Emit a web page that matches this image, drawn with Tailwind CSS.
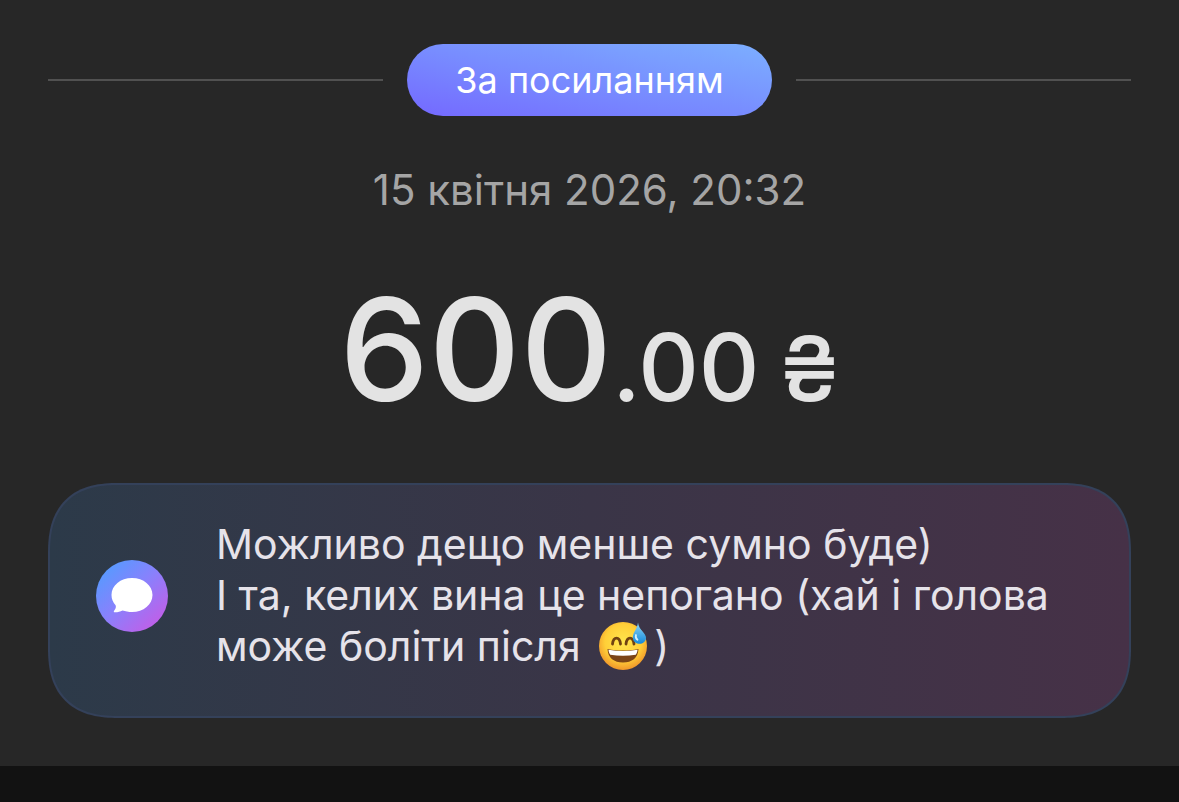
<!DOCTYPE html>
<html lang="uk">
<head>
    <meta charset="UTF-8">
    <meta name="viewport" content="width=device-width, initial-scale=1.0">
    <title>За посиланням</title>
    <script src="https://cdn.jsdelivr.net/npm/@tailwindcss/browser@4"></script>
</head>
<body class="min-h-screen bg-[#121212] font-['Inter','Noto_Sans',sans-serif]">
    <main class="bg-[#272727] px-12 pt-11 pb-12">
        <!-- Divider with the source badge -->
        <div class="flex items-center gap-6">
            <div class="h-0.5 flex-1 bg-[#515151]"></div>
            <h1 class="rounded-full bg-linear-to-tr from-[#7468ff] to-[#7cafff] px-12 text-4xl/[72px] text-white">За посиланням</h1>
            <div class="h-0.5 flex-1 bg-[#515151]"></div>
        </div>

        <p class="mt-12 text-center text-[42px]/[51px] text-[#a5a5a5]">15 квітня 2026, 20:32</p>

        <!-- Amount -->
        <p class="mt-14 flex items-baseline justify-center text-[142px]/[156px] font-medium text-[#e3e3e3]">
            <span>600</span>
            <span class="text-[94px]/[94px]">.00</span>
            <span class="ml-5 text-[90px]/[90px]">₴</span>
        </p>

        <!-- Comment -->
        <section class="mt-14 flex items-center gap-12 rounded-[70px] border-2 border-[#34415a] bg-linear-to-r from-[#2c3a49] via-[#3a3547] to-[#463147] pt-[34px] pr-12 pb-11 pl-[46px] [corner-shape:superellipse(1.3)]">
            <svg class="size-18 shrink-0" viewBox="0 0 72 72" aria-hidden="true">
                <defs>
                    <linearGradient id="bubble" x1="0.1" y1="0.1" x2="0.85" y2="0.9">
                        <stop offset="0" stop-color="#559bff"/>
                        <stop offset="0.5" stop-color="#8a80fc"/>
                        <stop offset="1" stop-color="#c05fe8"/>
                    </linearGradient>
                </defs>
                <circle cx="36" cy="36" r="36" fill="url(#bubble)"/>
                <path fill="#fff" d="M36 18c11.500 0 20.500 7.400 20.500 17S47.500 52 36 52c-3.500 0-6.600-.6-9.500-1.500-2.200 1.300-5.200 1.900-7.800 1.800-.9 0-1.200-.9-.6-1.600 1.600-1.700 2.200-3.800 1.500-5.400-2.600-2.800-4.100-6.300-4.100-10.300 0-9.600 9-17 20.500-17z"/>
            </svg>
            <p class="text-[41px]/[51px] text-[#e6e3ea]">
                Можливо дещо менше сумно буде)<br>
                І та, келих вина це непогано (хай і голова може боліти після
                <svg class="-my-1 mx-1.5 inline-block size-[50px] align-[-5px]" viewBox="0 0 50 50" role="img" aria-label="😅">
                    <defs>
                        <radialGradient id="face" cx="0.5" cy="0.42" r="0.58">
                            <stop offset="0" stop-color="#ffe64d"/>
                            <stop offset="0.65" stop-color="#ffcf38"/>
                            <stop offset="1" stop-color="#f0962a"/>
                        </radialGradient>
                        <linearGradient id="drop" x1="0" y1="0" x2="0" y2="1">
                            <stop offset="0" stop-color="#8fd8f8"/>
                            <stop offset="1" stop-color="#1488d8"/>
                        </linearGradient>
                    </defs>
                    <circle cx="25" cy="26" r="24" fill="url(#face)"/>
                    <path d="M14.500 24c.5-4 1.900-5.800 4-5.800s3.500 1.800 4 5.800M28 24c.5-4 1.900-5.800 4-5.800s3.500 1.800 4 5.800" fill="none" stroke="#704211" stroke-width="2.800" stroke-linecap="round"/>
                    <path d="M9.500 29c10 2 21 2 31 0-.5 9-6.500 13.500-15.500 13.500S10 38 9.500 29z" fill="#7b4417"/>
                    <path d="M10.500 29.800c9.500 1.700 19.500 1.700 29 0-.1 2-.8 3.700-1.800 5-8.300 1.300-17.100 1.300-25.400 0-1-1.300-1.700-3-1.800-5z" fill="#fff"/>
                    <path d="M40 2.500c.6 7.500 8.500 10.500 8 15.800-.4 3.800-3.600 5.900-7.400 5.500-3.700-.4-6.100-3.300-5.700-7.200C35.400 12 39.200 9 40 2.500z" fill="url(#drop)"/>
                    <path d="M38 15c-.6 2 0 3.800 1.500 4.800" fill="none" stroke="#d4f1ff" stroke-width="1.800" stroke-linecap="round"/>
                </svg>)
            </p>
        </section>
    </main>
</body>
</html>
